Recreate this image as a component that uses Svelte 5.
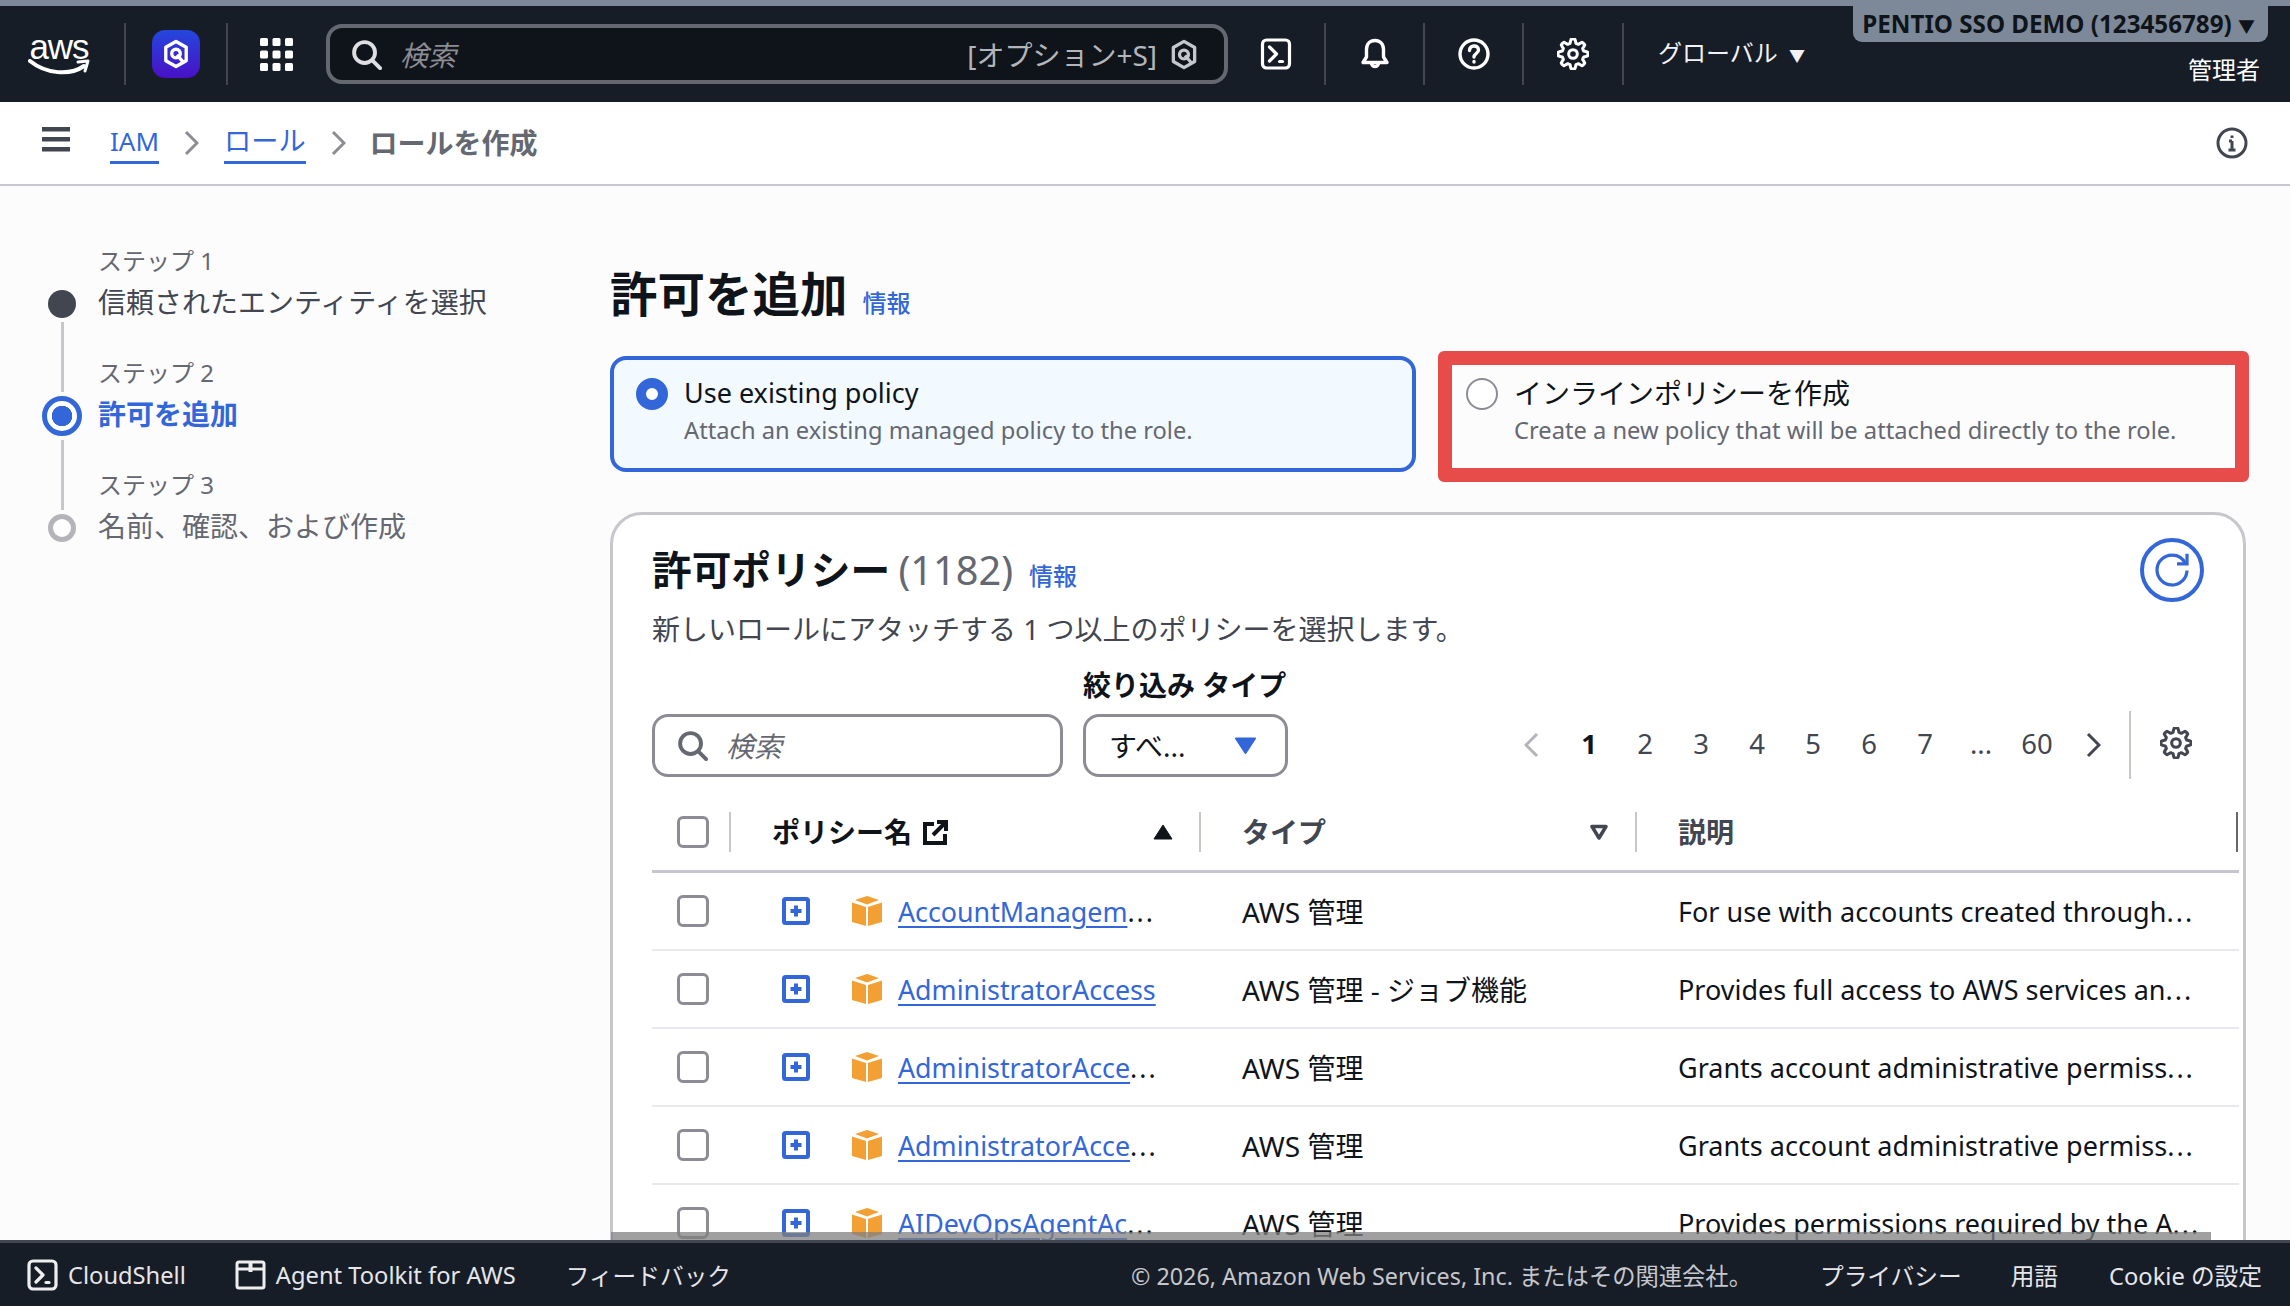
<script>
  const steps = [
    { label: 'ステップ 1', title: '信頼されたエンティティを選択', state: 'done' },
    { label: 'ステップ 2', title: '許可を追加', state: 'current' },
    { label: 'ステップ 3', title: '名前、確認、および作成', state: 'todo' }
  ];

  const rows = [
    { name: 'AccountManagem', cut: true, type: 'AWS 管理', desc: 'For use with accounts created through' },
    { name: 'AdministratorAccess', cut: false, type: 'AWS 管理 - ジョブ機能', desc: 'Provides full access to AWS services an' },
    { name: 'AdministratorAcce', cut: true, type: 'AWS 管理', desc: 'Grants account administrative permiss' },
    { name: 'AdministratorAcce', cut: true, type: 'AWS 管理', desc: 'Grants account administrative permiss' },
    { name: 'AIDevOpsAgentAc', cut: true, type: 'AWS 管理', desc: 'Provides permissions required by the A' }
  ];

  const pages = ['1', '2', '3', '4', '5', '6', '7', '...', '60'];

  // scalloped cog outline, 8 lobes
  function cog() {
    let d = '';
    for (let i = 0; i < 96; i++) {
      const a = (i / 96) * Math.PI * 2;
      const wave = Math.max(-1, Math.min(1, 1.8 * Math.cos(a * 8)));
      const r = 8.1 + 1.25 * wave;
      d += (i ? 'L' : 'M') + (10 + r * Math.sin(a)).toFixed(2) + ' ' + (10 - r * Math.cos(a)).toFixed(2);
    }
    return d + 'Z';
  }
  const cogPath = cog();
</script>

{#snippet gear(cls)}
  <svg class={cls} viewBox="0 0 20 20" fill="none" stroke="currentColor" stroke-width="1.9" stroke-linejoin="round">
    <path d={cogPath} />
    <circle cx="10" cy="10" r="2.7" />
  </svg>
{/snippet}

{#snippet lens(cls)}
  <svg class={cls} viewBox="0 0 16 16" fill="none" stroke="currentColor" stroke-width="2" stroke-linecap="round">
    <circle cx="7" cy="7" r="5.4" />
    <path d="M11 11l4 4" />
  </svg>
{/snippet}

{#snippet hexQ(cls)}
  <svg class={cls} viewBox="0 0 28 32" fill="none" stroke="currentColor" stroke-width="3.4" stroke-linejoin="round">
    <path d="M14 2.5l11 6.300v14.400l-11 6.300-11-6.300V8.800z" />
    <circle cx="14" cy="16" r="4.6" />
    <path d="M15 17l7 8" />
  </svg>
{/snippet}

{#snippet shell(cls)}
  <svg class={cls} viewBox="0 0 31 32" fill="none" stroke="currentColor" stroke-width="3.200" stroke-linejoin="round" stroke-linecap="round">
    <rect x="2" y="2" width="27" height="28" rx="4" />
    <path d="M9 9l7 7-7 7" />
    <path d="M19 23.500h3" />
  </svg>
{/snippet}

<div class="page">
  <div class="strip"></div>

  <header class="topnav">
    <div class="cell logo-cell">
      <div class="aws">
        <span class="aws-word">aws</span>
        <svg class="smile" viewBox="0 0 62 18" fill="none">
          <path d="M2 2c16 13 40 15 54 5" stroke="#fff" stroke-width="4" stroke-linecap="round" />
          <path d="M50 3l10-1-3 10" stroke="#fff" stroke-width="3" stroke-linejoin="round" stroke-linecap="round" />
        </svg>
      </div>
    </div>
    <div class="cell q-cell">
      <div class="q-tile">
        <svg viewBox="0 0 28 32" fill="none" stroke="#fff" stroke-width="3.600" stroke-linejoin="round">
          <path d="M14 2.500l11 6.300v14.400l-11 6.300-11-6.300V8.800z" />
          <circle cx="14" cy="15.500" r="4.600" />
          <path d="M15 17l7 8" />
        </svg>
      </div>
    </div>
    <div class="apps">
      <svg viewBox="0 0 33 33" fill="#fff">
        {#each [0, 12.500, 25] as y}
          {#each [0, 12.500, 25] as x}
            <rect {x} {y} width="8" height="8" rx="1.500" />
          {/each}
        {/each}
      </svg>
    </div>
    <div class="nav-search">
      {@render lens('nav-lens')}
      <span class="nav-placeholder">検索</span>
      <span class="shortcut">[オプション+S]</span>
      {@render hexQ('nav-hex')}
    </div>
    <div class="cell tool first-tool">{@render shell('tool-icon')}</div>
    <div class="cell tool">
      <svg class="tool-icon" viewBox="0 0 32 32" fill="none" stroke="#fff" stroke-width="3.400" stroke-linejoin="round">
        <path d="M16 2.500c-5 0-8.500 3.500-8.500 9v7.500L4 24.500h24L24.500 19v-7.500c0-5.500-3.500-9-8.500-9z" />
        <path d="M12.500 25a3.500 3.500 0 007 0" />
      </svg>
    </div>
    <div class="cell tool">
      <svg class="tool-icon" viewBox="0 0 32 32" fill="none" stroke="#fff" stroke-width="3.400" stroke-linecap="round">
        <circle cx="16" cy="16" r="14" />
        <path d="M11.500 12.500c0-6 9-6 9-.5 0 3.500-4.500 3.500-4.500 7" />
        <path d="M16 23.500v.5" />
      </svg>
    </div>
    <div class="cell tool last-tool">{@render gear('tool-icon')}</div>
    <div class="region">グローバル <span class="caret">▼</span></div>
    <div class="account">
      <div class="account-badge">PENTIO SSO DEMO (123456789) <span class="caret-small">▼</span></div>
      <div class="account-role">管理者</div>
    </div>
  </header>

  <nav class="crumbs">
    <svg class="burger" viewBox="0 0 28 25" fill="#424650">
      <rect width="28" height="4.500" y="0" />
      <rect width="28" height="4.500" y="10" />
      <rect width="28" height="4.500" y="20" />
    </svg>
    <a class="crumb-link">IAM</a>
    <svg class="crumb-sep" viewBox="0 0 15 26" fill="none" stroke="#8c8c94" stroke-width="3"><path d="M2 2l11 11L2 24" /></svg>
    <a class="crumb-link jp">ロール</a>
    <svg class="crumb-sep" viewBox="0 0 15 26" fill="none" stroke="#8c8c94" stroke-width="3"><path d="M2 2l11 11L2 24" /></svg>
    <span class="crumb-now">ロールを作成</span>
    <svg class="crumb-info" viewBox="0 0 32 32" fill="none" stroke="#424650" stroke-width="3">
      <circle cx="16" cy="16" r="14" />
      <path d="M16 14v9M12.500 23h7M13 14h3" />
      <path d="M16 8.500v2.500" />
    </svg>
  </nav>

  <div class="body">
    <aside class="wizard">
      {#each steps as step, i}
        <div class="step-label" style="grid-row: {i * 3 + 1}">{step.label}</div>
        <div class="dot-slot" style="grid-row: {i * 3 + 2}"><span class="dot {step.state}"></span></div>
        <div class="step-title {step.state}" style="grid-row: {i * 3 + 2}">{step.title}</div>
        {#if i < steps.length - 1}
          <div class="rail" class:lower={i === 1} style="grid-row: {i * 3 + 3} / {i * 3 + 5}"></div>
        {/if}
      {/each}
    </aside>

    <main class="content">
      <div class="page-title">
        <h1>許可を追加</h1>
        <a class="info">情報</a>
      </div>

      <div class="choices">
        <div class="choice selected">
          <span class="radio on"></span>
          <div>
            <div class="choice-name latin">Use existing policy</div>
            <div class="choice-desc">Attach an existing managed policy to the role.</div>
          </div>
        </div>
        <div class="choice">
          <span class="radio"></span>
          <div>
            <div class="choice-name">インラインポリシーを作成</div>
            <div class="choice-desc">Create a new policy that will be attached directly to the role.</div>
          </div>
          <div class="callout"></div>
        </div>
      </div>

      <section class="panel">
        <div class="panel-head">
          <h2>許可ポリシー <span class="count">(1182)</span></h2>
          <a class="info panel-info">情報</a>
          <button class="refresh" aria-label="更新">
            <svg viewBox="0 0 16 16" fill="none" stroke="currentColor" stroke-width="1.300">
              <path d="M14 8.200A6 6 0 118 2c2.500 0 4.500 1.400 5.400 3.500" />
              <path d="M14 1.500v4h-4" />
            </svg>
          </button>
        </div>
        <p class="panel-desc">新しいロールにアタッチする 1 つ以上のポリシーを選択します。</p>

        <div class="filters">
          <div class="table-search">
            {@render lens('table-lens')}
            <span class="table-placeholder">検索</span>
          </div>
          <div class="filter-type">
            <div class="filter-label">絞り込み タイプ</div>
            <div class="select">
              <span class="select-value">すべ...</span>
              <svg viewBox="0 0 23 17" fill="#3367d9"><path d="M2 1.500h19L11.500 16z" stroke="#3367d9" stroke-width="2" stroke-linejoin="round" /></svg>
            </div>
          </div>
          <div class="pager">
            <svg class="pager-arrow" viewBox="0 0 15 26" fill="none" stroke="#b4b4bb" stroke-width="3"><path d="M13 2L2 13l11 11" /></svg>
            {#each pages as p, i}
              <span class="page-num" class:current={i === 0}>{p}</span>
            {/each}
            <svg class="pager-arrow next" viewBox="0 0 15 26" fill="none" stroke="#424650" stroke-width="3"><path d="M2 2l11 11L2 24" /></svg>
            <span class="pager-rule"></span>
            {@render gear('pager-gear')}
          </div>
        </div>

        <div class="table">
          <div class="table-row head">
            <div class="th check"><span class="box"></span></div>
            <div class="th sorted">
              <span class="th-name">ポリシー名</span>
              <svg class="external" viewBox="0 0 25 25" fill="none" stroke="#0f141a" stroke-width="4">
                <path d="M11 4H2v19h20v-9" />
                <path d="M14 2h9v9M23 2L10 15" />
              </svg>
              <svg class="sort" viewBox="0 0 20 16" fill="#0f141a"><path d="M10 1l9 14H1z" stroke="#0f141a" stroke-linejoin="round" /></svg>
            </div>
            <div class="th">
              <span class="th-name">タイプ</span>
              <svg class="sort" viewBox="0 0 20 16" fill="none" stroke="#424650" stroke-width="3.500" stroke-linejoin="round"><path d="M3 2.500h14L10 14z" /></svg>
            </div>
            <div class="th last"><span class="th-name">説明</span></div>
          </div>

          {#each rows as row}
            <div class="table-row">
              <div class="td check"><span class="box"></span></div>
              <div class="td name">
                <svg class="expand" viewBox="0 0 28 28">
                  <rect x="2" y="2" width="24" height="24" rx="1.500" fill="none" stroke="#3367d9" stroke-width="4" />
                  <path d="M14 8.500v11M8.500 14h11" stroke="#3367d9" stroke-width="4" />
                </svg>
                <svg class="cube" viewBox="0 0 30 30" fill="#f2a033">
                  <path d="M15 0l12 4-12 4.500L3 4z" />
                  <path d="M0 6.500l14 4.500v19L0 26z" />
                  <path d="M30 6.500L16 11v19l14-4z" />
                </svg>
                <span class="policy"><a>{row.name}</a>{#if row.cut}<span class="dots">...</span>{/if}</span>
              </div>
              <div class="td type">{row.type}</div>
              <div class="td desc">{row.desc}<span class="dots">...</span></div>
            </div>
          {/each}
        </div>
      </section>
      <div class="scrollbar"></div>
    </main>
  </div>

  <footer class="footer">
    <div class="foot-item first">
      {@render shell('foot-icon')}
      <span>CloudShell</span>
    </div>
    <div class="foot-item">
      <svg class="foot-icon" viewBox="0 0 31 32" fill="none" stroke="currentColor" stroke-width="3">
        <rect x="2" y="3" width="27" height="26" rx="2" />
        <path d="M2 10h27" />
        <path d="M15.500 4v9" stroke-width="4" />
      </svg>
      <span>Agent Toolkit for AWS</span>
    </div>
    <span class="feedback">フィードバック</span>
    <span class="copyright">© 2026, Amazon Web Services, Inc. またはその関連会社。</span>
    <span class="foot-link privacy">プライバシー</span>
    <span class="foot-link terms">用語</span>
    <span class="foot-link">Cookie の設定</span>
  </footer>
</div>

<style>
  :global(body) {
    margin: 0;
    background: #fcfcfd;
  }

  .page {
    display: flex;
    flex-direction: column;
    width: 2290px;
    height: 1306px;
    overflow: hidden;
    font-family: "Noto Sans", "Noto Sans CJK JP", sans-serif;
    font-size: 28px;
    color: #0f141a;
    background: #fcfcfd;
  }

  a {
    color: #3367d9;
  }

  /* top bar */
  .strip {
    flex: none;
    height: 6px;
    background: #7d8998;
  }

  .topnav {
    flex: none;
    display: flex;
    align-items: center;
    height: 96px;
    background: #161d26;
    color: #fff;
  }

  .cell {
    display: flex;
    align-items: center;
    justify-content: center;
    height: 62px;
    border-right: 2px solid #424650;
    box-sizing: border-box;
  }

  .logo-cell {
    width: 126px;
    justify-content: flex-start;
    padding-left: 28px;
  }

  .aws {
    position: relative;
    width: 62px;
    height: 44px;
  }

  .aws-word {
    display: block;
    font-family: "Liberation Sans", sans-serif;
    font-size: 35px;
    line-height: 30px;
    text-align: center;
    letter-spacing: -1px;
  }

  .smile {
    display: block;
    width: 62px;
    height: 18px;
    margin-top: -3px;
  }

  .q-cell {
    width: 102px;
  }

  .q-tile {
    display: flex;
    align-items: center;
    justify-content: center;
    width: 48px;
    height: 48px;
    border-radius: 13px;
    background: linear-gradient(180deg, #2447dc, #4a10c6);
  }

  .q-tile svg {
    width: 26px;
    height: 30px;
  }

  .apps {
    flex: none;
    display: flex;
    justify-content: center;
    width: 97px;
    margin-right: 1px;
  }

  .apps svg {
    width: 33px;
    height: 33px;
  }

  .nav-search {
    flex: none;
    display: flex;
    align-items: center;
    box-sizing: border-box;
    width: 902px;
    height: 60px;
    padding: 0 26px 0 21px;
    border: 4px solid #656871;
    border-radius: 16px;
    background: #0f141a;
  }

  .nav-lens {
    width: 31px;
    height: 31px;
    color: #dedee3;
  }

  .nav-placeholder {
    margin-left: 18px;
    font-style: italic;
    color: #8c8c94;
  }

  .shortcut {
    margin-left: auto;
    color: #b4b4bb;
    white-space: nowrap;
  }

  .nav-hex {
    width: 28px;
    height: 31px;
    margin-left: 13px;
    color: #c6c6cd;
  }

  .tool {
    width: 99px;
  }

  .first-tool {
    width: 98px;
  }

  .last-tool {
    width: 100px;
  }

  .tool-icon {
    width: 32px;
    height: 32px;
    color: #fff;
  }

  .region {
    padding: 0 0 5px 34px;
    font-size: 24px;
    white-space: nowrap;
    color: #f3f3f7;
  }

  .caret {
    margin-left: 5px;
    font-size: 16px;
  }

  .account {
    display: flex;
    flex-direction: column;
    align-items: flex-end;
    align-self: flex-start;
    margin-left: auto;
    padding-right: 22px;
  }

  .account-badge {
    height: 36px;
    padding: 1px 13px 0 9px;
    box-sizing: border-box;
    border-radius: 0 0 9px 9px;
    background: #7d8998;
    color: #0f141a;
    font-size: 24.2px;
    font-weight: 700;
    line-height: 34px;
    white-space: nowrap;
  }

  .caret-small {
    font-size: 17px;
  }

  .account-role {
    margin-top: 10px;
    padding-right: 8px;
    font-size: 24px;
    line-height: 36px;
    color: #fff;
  }

  /* breadcrumbs */
  .crumbs {
    flex: none;
    display: flex;
    align-items: center;
    box-sizing: content-box;
    height: 82px;
    padding: 0 42px;
    border-bottom: 2px solid #c6c6cd;
    background: #fff;
  }

  .burger {
    width: 28px;
    height: 25px;
    margin: -8px 40px 0 0;
  }

  .crumb-link {
    padding-bottom: 1px;
    border-bottom: 3px solid #3367d9;
    font-size: 26px;
    line-height: 38px;
  }

  .crumb-link.jp {
    font-size: 27.2px;
  }

  .crumb-sep {
    width: 15px;
    height: 26px;
    margin: 0 25px;
  }

  .crumb-now {
    margin: -2px 0 0 -1px;
    font-weight: 700;
    color: #656871;
  }

  .crumb-info {
    width: 32px;
    height: 32px;
    margin-left: auto;
    margin-right: 0;
  }

  /* layout under the bars */
  .body {
    position: relative;
    flex: 1;
    display: flex;
    min-height: 0;
    overflow: hidden;
  }

  .wizard {
    flex: none;
    display: grid;
    grid-template-columns: 40px 1fr;
    grid-template-rows: 38px 42px 32px 38px 42px 32px 38px 42px;
    column-gap: 16px;
    align-content: start;
    box-sizing: border-box;
    width: 610px;
    padding: 57px 0 0 42px;
  }

  .step-label {
    grid-column: 2;
    align-self: center;
    margin-bottom: 5px;
    font-size: 24px;
    color: #656871;
  }

  .dot-slot {
    grid-column: 1;
    display: flex;
    align-items: center;
    justify-content: center;
    padding-top: 4px;
  }

  .dot {
    box-sizing: border-box;
    width: 28px;
    height: 28px;
    border-radius: 50%;
  }

  .dot.done {
    background: #424650;
  }

  .dot.current {
    flex: none;
    width: 40px;
    height: 40px;
    border: 5px solid #3367d9;
    background: radial-gradient(circle, #3367d9 0 10px, #fff 10.5px);
  }

  .dot.todo {
    border: 5px solid #b4b4bb;
    background: #fff;
  }

  .step-title {
    grid-column: 2;
    align-self: center;
    margin-bottom: 2px;
    font-size: 28px;
    color: #424650;
  }

  .step-title.current {
    font-weight: 700;
    color: #3367d9;
  }

  .step-title.todo {
    color: #656871;
  }

  .rail {
    grid-column: 1;
    justify-self: center;
    width: 3px;
    margin: -1px 0 1px;
    background: #c6c6cd;
  }

  .rail.lower {
    margin: 5px 0 -5px;
  }

  .content {
    flex: none;
    width: 1636px;
  }

  .page-title {
    display: flex;
    align-items: baseline;
    gap: 15px;
    height: 50px;
    margin-top: 83px;
  }

  h1 {
    margin: 0;
    font-size: 47.500px;
    font-weight: 700;
    line-height: 50px;
  }

  .info {
    font-size: 24px;
    font-weight: 500;
  }

  .choices {
    display: grid;
    grid-template-columns: 806px 806px;
    gap: 24px;
    margin-top: 37px;
  }

  .choice {
    position: relative;
    display: flex;
    gap: 16px;
    box-sizing: border-box;
    height: 116px;
    padding: 16px 22px;
    border: 4px solid transparent;
    border-radius: 16px;
  }

  .choice.selected {
    border-color: #3367d9;
    background: #f2faff;
  }

  .radio {
    flex: none;
    box-sizing: border-box;
    width: 32px;
    height: 32px;
    margin-top: 2px;
    border: 2px solid #8c8c94;
    border-radius: 50%;
    background: #fff;
  }

  .radio.on {
    border: 10px solid #3367d9;
  }

  .choice-name {
    font-size: 28px;
    line-height: 34px;
  }

  .choice-name.latin {
    font-size: 27px;
  }

  .choice-desc {
    margin-top: 3px;
    font-size: 23.700px;
    line-height: 34px;
    color: #656871;
    white-space: nowrap;
  }

  .callout {
    position: absolute;
    top: -9px;
    right: -7px;
    bottom: -14px;
    left: -6px;
    border: 14px solid #e74c4a;
    border-radius: 6px;
  }

  .panel {
    box-sizing: border-box;
    height: 900px;
    margin-top: 40px;
    padding: 23px 39px 0;
    border: 3px solid #c6c6cd;
    border-radius: 32px;
    background: #fff;
  }

  .panel-head {
    display: flex;
    align-items: center;
    height: 64px;
  }

  h2 {
    margin: -4px 0 0;
    font-size: 39.700px;
    font-weight: 700;
    white-space: nowrap;
  }

  .count {
    margin-left: -2px;
    font-weight: 400;
    color: #656871;
  }

  .panel-info {
    margin: 9px 0 0 16px;
  }

  .refresh {
    display: flex;
    align-items: center;
    justify-content: center;
    box-sizing: border-box;
    width: 64px;
    height: 64px;
    margin-left: auto;
    padding: 0;
    border: 4px solid #3367d9;
    border-radius: 50%;
    background: #fff;
    color: #3367d9;
  }

  .refresh svg {
    width: 40px;
    height: 40px;
  }

  .panel-desc {
    margin: 8px 0 0;
    line-height: 38px;
    color: #424650;
  }

  .filters {
    display: flex;
    align-items: flex-end;
    margin-top: 18px;
  }

  .table-search {
    display: flex;
    align-items: center;
    box-sizing: border-box;
    width: 411px;
    height: 63px;
    padding: 0 22px;
    border: 3px solid #8c8c94;
    border-radius: 16px;
    background: #fff;
  }

  .table-lens {
    width: 31px;
    height: 31px;
    color: #656871;
  }

  .table-placeholder {
    margin: -2px 0 0 18px;
    font-style: italic;
    color: #656871;
  }

  .filter-type {
    width: 205px;
    margin-left: 20px;
  }

  .filter-label {
    height: 38px;
    margin-bottom: 10px;
    font-weight: 700;
    line-height: 38px;
    white-space: nowrap;
  }

  .select {
    display: flex;
    align-items: center;
    justify-content: space-between;
    box-sizing: border-box;
    height: 63px;
    padding: 0 28px 0 23px;
    border: 3px solid #8c8c94;
    border-radius: 16px;
  }

  .select-value {
    margin-top: -2px;
  }

  .select svg {
    width: 23px;
    height: 17px;
  }

  .pager {
    display: flex;
    align-items: center;
    height: 68px;
    margin: 0 12px -2px auto;
  }

  .pager-arrow {
    width: 15px;
    height: 26px;
    margin: 0 22px;
  }

  .pager-arrow.next {
    margin: 0 29px 0 21px;
  }

  .page-num {
    width: 56px;
    padding-bottom: 4px;
    text-align: center;
    color: #424650;
    font-size: 27.500px;
  }

  .page-num.current {
    font-weight: 700;
    color: #0f141a;
  }

  .pager-rule {
    width: 2px;
    height: 68px;
    margin-left: -1px;
    background: #c6c6cd;
  }

  .pager-gear {
    width: 32px;
    height: 32px;
    margin: -4px 0 0 29px;
    color: #424650;
  }

  .table {
    margin: 35px -35px 0 0;
  }

  .table-row {
    display: grid;
    grid-template-columns: 79px 470px 436px 1fr;
    height: 78px;
    box-sizing: border-box;
    border-bottom: 2px solid #e9e9ed;
  }

  .table-row.head {
    height: 61px;
    border-bottom: 3px solid #c6c6cd;
  }

  .th {
    display: flex;
    align-items: center;
    box-sizing: border-box;
    height: 40px;
    padding: 0 26px 0 41px;
    border-right: 2px solid #c6c6cd;
    font-weight: 700;
    color: #424650;
  }

  .th .sort {
    width: 20px;
    height: 16px;
    margin-left: auto;
  }

  .th.sorted {
    color: #0f141a;
  }

  .th.check {
    padding: 0 0 0 25px;
  }

  .th.last {
    margin-right: 1px;
    border-right-color: #656871;
  }

  .th-name {
    margin-top: -3px;
  }

  .external {
    width: 25px;
    height: 25px;
    margin-left: 11px;
  }

  .box {
    box-sizing: border-box;
    width: 32px;
    height: 32px;
    border: 3px solid #8c8c94;
    border-radius: 6px;
    background: #fff;
  }

  .td {
    display: flex;
    align-items: center;
    padding-left: 41px;
    white-space: nowrap;
    font-size: 27px;
  }

  .td.check {
    padding-left: 25px;
  }

  .td.name {
    padding-left: 51px;
    font-size: 26.800px;
  }

  .td.type {
    font-size: 28px;
  }

  .expand {
    width: 28px;
    height: 28px;
  }

  .cube {
    width: 30px;
    height: 30px;
    margin: 0 16px 0 42px;
  }

  .policy a {
    text-decoration: underline;
    text-underline-offset: 4px;
    text-decoration-thickness: 2px;
  }

  .dots {
    letter-spacing: 2px;
  }

  .scrollbar {
    position: absolute;
    bottom: 0;
    left: 611px;
    width: 1600px;
    height: 8px;
    background: rgba(128, 128, 128, 0.75);
  }

  /* footer */
  .footer {
    flex: none;
    display: flex;
    align-items: center;
    box-sizing: border-box;
    height: 66px;
    padding: 0 28px 0 27px;
    border-top: 3px solid #424650;
    background: #161d26;
    color: #e6e6eb;
    font-size: 23.700px;
  }

  .foot-item {
    display: flex;
    align-items: center;
    gap: 10px;
    margin-left: 49px;
  }

  .foot-item.first {
    margin-left: 0;
  }

  .foot-icon {
    width: 31px;
    height: 32px;
    color: #eee;
  }

  .feedback {
    margin-left: 50px;
  }

  .copyright {
    margin-left: auto;
    font-size: 23.300px;
    color: #c6c6cd;
  }

  .foot-link {
    margin-left: 51px;
  }

  .privacy {
    margin-left: 68px;
  }

  .terms {
    margin-left: 49px;
  }
</style>
